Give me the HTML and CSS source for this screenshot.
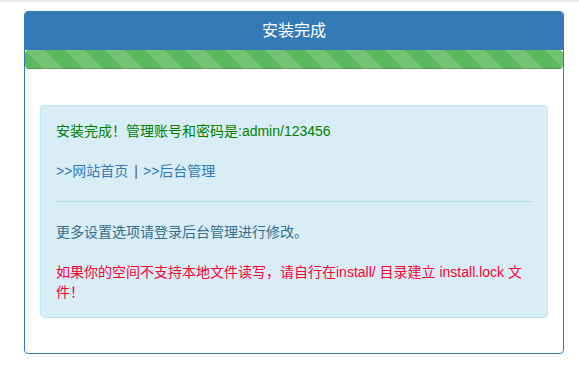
FILE: index.html
```html
<!DOCTYPE html>
<html lang="zh-CN">
<head>
    <meta charset="UTF-8">
    <meta name="viewport" content="width=device-width, initial-scale=1.0">
    <title>安装完成</title>
    <link rel="stylesheet" href="styles.css">
</head>
<body>
    <div class="topline"></div>
    <div class="panel">
        <div class="panel-heading">安装完成</div>
        <div class="progress">
            <div class="progress-bar"></div>
        </div>
        <div class="panel-body">
            <div class="alert">
                <p class="ok">安装完成！管理账号和密码是:admin/123456</p>
                <p class="links"><a href="#">&gt;&gt;网站首页</a><span class="sep">|</span><a href="#">&gt;&gt;后台管理</a></p>
                <hr>
                <p class="more">更多设置选项请登录后台管理进行修改。</p>
                <p class="warn">如果你的空间不支持本地文件读写，请自行在install/ 目录建立 install.lock 文件！</p>
            </div>
        </div>
    </div>
</body>
</html>
```

FILE: styles.css
```css
body {
    margin: 0;
    font-family: "Liberation Sans", Arial, "Noto Sans CJK SC", sans-serif;
    font-size: 14px;
    line-height: 20px;
    color: #333;
    background: #fff;
}

.topline {
    height: 2px;
    background: #e9e9e9;
}

.panel {
    width: 540px;
    margin: 9px 0 0 24px;
    border: 1px solid #337ab7;
    border-radius: 4px;
    box-sizing: border-box;
}

.panel-heading {
    background: #337ab7;
    color: #fff;
    text-align: center;
    font-size: 16px;
    height: 38px;
    line-height: 38px;
    border-radius: 3px 3px 0 0;
}

.progress {
    height: 19px;
    background: #f5f5f5;
    border-radius: 4px;
    overflow: hidden;
}

.progress-bar {
    height: 100%;
    background-color: #5cb85c;
    background-image: linear-gradient(45deg, rgba(255, 255, 255, .15) 25%, transparent 25%, transparent 50%, rgba(255, 255, 255, .15) 50%, rgba(255, 255, 255, .15) 75%, transparent 75%, transparent);
    background-size: 40px 40px;
    box-shadow: inset 0 -1px 0 rgba(0, 0, 0, .15);
}

.panel-body {
    padding: 36px 15px 15px;
}

.alert {
    background: #d9edf7;
    border: 1px solid #bce8f1;
    border-radius: 4px;
    padding: 15px;
    margin-bottom: 20px;
    color: #31708f;
}

.alert p {
    margin: 0;
}

.alert .ok {
    color: #008000;
    margin-bottom: 20px;
}

.alert .links a {
    color: #337ab7;
    text-decoration: none;
}

.alert .links .sep {
    margin: 0 5px 0 6px;
    color: #555;
}

.alert hr {
    margin: 20px 0;
    border: 0;
    border-top: 1px solid #a6e1ec;
}

.alert .more {
    margin-bottom: 20px;
}

.alert .warn {
    color: #ff0033;
}
```
